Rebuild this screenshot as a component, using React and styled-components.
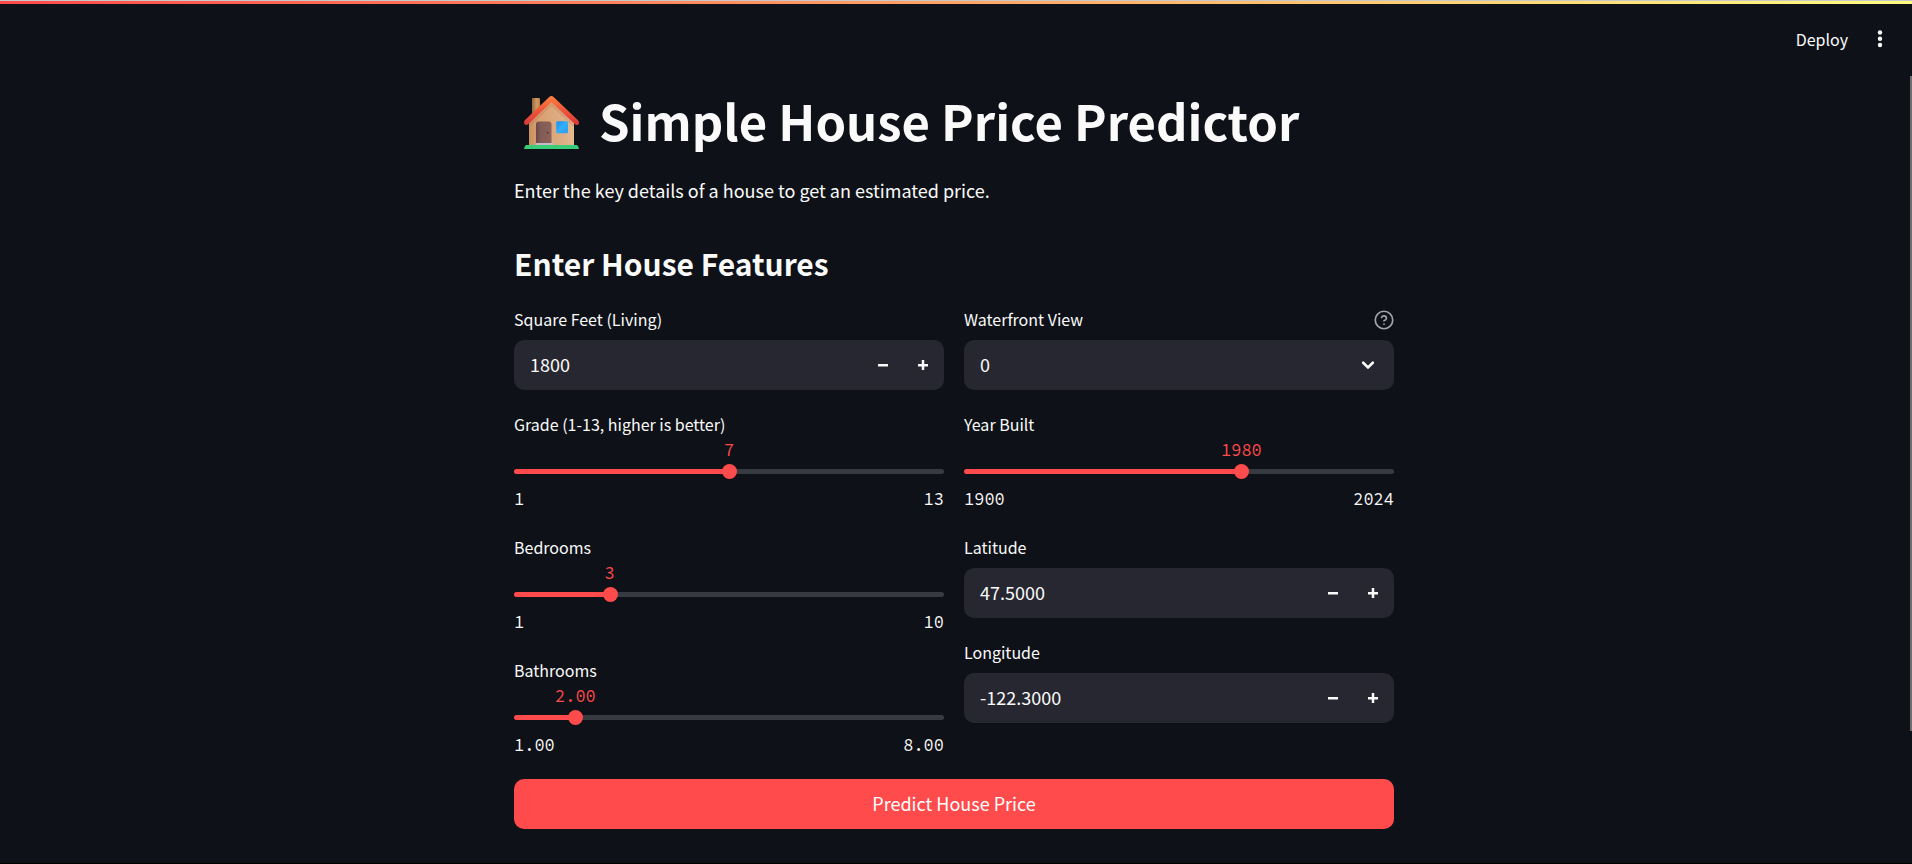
import React, { useId, useState } from "react";
import styled, { createGlobalStyle } from "styled-components";

const sans = `"Source Sans Pro", "Noto Sans CJK SC", "Open Sans", sans-serif`;
const mono = `"Source Code Pro", "Liberation Mono", monospace`;

const GlobalStyle = createGlobalStyle`
  *, *::before, *::after { box-sizing: border-box; }
  html { background: #0e1117; }
  body {
    margin: 0;
    background: #0e1117;
    color: #fafafa;
    font-family: ${sans};
    font-size: 18px;
  }
  button, input, select { font: inherit; color: inherit; }
`;

const Page = styled.div`
  min-height: 100vh;
  display: flex;
  flex-direction: column;
  border-top: 1px solid #c9c9cb;
  border-bottom: 1px solid #000;
`;

const Decoration = styled.div`
  height: 3px;
  background: linear-gradient(90deg, #ff4b4b, #fffd80);
`;

const Toolbar = styled.header`
  display: flex;
  justify-content: flex-end;
  align-items: center;
  gap: 20px;
  height: 72px;
  padding: 0 20px 2px 0;
`;

const ToolbarButton = styled.button`
  display: flex;
  align-items: center;
  justify-content: center;
  height: 30px;
  min-width: 24px;
  padding: 0;
  border: 0;
  background: none;
  font-size: 16px;
  line-height: 20px;
  cursor: pointer;
`;

const Content = styled.main`
  width: 100%;
  max-width: 884px;
  margin: 0 auto;
  padding: 8px 4px 32px 0;
  flex: 1;
`;

const Title = styled.h1`
  display: flex;
  align-items: center;
  gap: 20px;
  height: 76px;
  margin: 0;
  padding-left: 10px;
  font-size: 49px;
  line-height: 72px;
  font-weight: 700;
`;

const TitleText = styled.span`
  padding-bottom: 4px;
`;

const Intro = styled.p`
  margin: 18px 0 0;
  font-size: 18px;
  line-height: 24px;
`;

const Subtitle = styled.h2`
  margin: 36px 0 0;
  font-size: 30px;
  line-height: 50px;
  font-weight: 700;
`;

const Columns = styled.div`
  display: grid;
  grid-template-columns: 1fr 1fr;
  gap: 20px;
  margin-top: 22px;
`;

const Column = styled.div`
  display: flex;
  flex-direction: column;
  gap: 25px;
`;

const LabelRow = styled.div`
  display: flex;
  justify-content: space-between;
  align-items: flex-start;
  height: 20px;
`;

const Label = styled.label`
  font-size: 16px;
  line-height: 18px;
`;

const HelpButton = styled.button`
  display: flex;
  padding: 0;
  border: 0;
  background: none;
  color: #a3a4a8;
  cursor: help;
`;

const Box = styled.div`
  display: flex;
  align-items: center;
  height: 50px;
  margin-top: 10px;
  padding-right: 1px;
  border-radius: 10px;
  background: #262730;
  overflow: hidden;
`;

const NumberInput = styled.input`
  flex: 1;
  min-width: 0;
  height: 50px;
  padding: 0 16px 2px;
  border: 0;
  outline: 0;
  background: none;
  appearance: textfield;
  &::-webkit-inner-spin-button { appearance: none; margin: 0; }
`;

const StepButton = styled.button`
  display: flex;
  align-items: center;
  justify-content: center;
  width: 40px;
  height: 50px;
  padding: 0;
  border: 0;
  background: none;
  cursor: pointer;
`;

const SelectBox = styled(Box)`
  display: grid;
  padding: 0;
  & > * { grid-area: 1 / 1; }
  & > svg { justify-self: end; margin-right: 16px; pointer-events: none; }
`;

const Select = styled.select`
  width: 100%;
  height: 50px;
  padding: 0 16px 2px;
  border: 0;
  outline: 0;
  appearance: none;
  background: #262730;
`;

const SliderValue = styled.output`
  display: block;
  width: max-content;
  margin-top: 5px;
  transform: translateX(-50%);
  color: #ff4b4b;
  font-family: ${mono};
  font-size: 17px;
  line-height: 20px;
`;

const Rail = styled.div`
  display: grid;
  align-items: center;
  height: 15px;
  margin-top: 4px;
  & > * { grid-area: 1 / 1; }
`;

const Track = styled.div`
  height: 5px;
  border-radius: 3px;
`;

const Range = styled.input`
  height: 15px;
  margin: 0 -8px 0 -7px;
  appearance: none;
  background: none;
  cursor: pointer;
  &::-webkit-slider-thumb {
    appearance: none;
    width: 15px;
    height: 15px;
    border-radius: 50%;
    background: #ff4b4b;
  }
`;

const Limits = styled.div`
  display: flex;
  justify-content: space-between;
  margin-top: 10px;
  padding-bottom: 4px;
  font-family: ${mono};
  font-size: 17px;
  line-height: 20px;
`;

const Submit = styled.button`
  display: block;
  width: 100%;
  height: 50px;
  margin-top: 20px;
  padding: 0 0 2px;
  border: 0;
  border-radius: 10px;
  background: #ff4b4b;
  color: #fff;
  line-height: 24px;
  cursor: pointer;
`;

const ScrollThumb = styled.div`
  position: fixed;
  top: 76px;
  right: 0;
  width: 2px;
  height: calc(76vh - 2px);
  background: #6f6f72;
`;

const House = () => (
  <svg width="55" height="53" viewBox="0 0 55 53" role="img" aria-label="House">
    <defs>
      <linearGradient id="wall" x1="0" x2="1">
        <stop offset="0" stopColor="#c8905f" />
        <stop offset=".22" stopColor="#d9a071" />
        <stop offset=".8" stopColor="#dfaf87" />
        <stop offset="1" stopColor="#e6bc91" />
      </linearGradient>
      <linearGradient id="chimney" x1="0" x2="1">
        <stop offset="0" stopColor="#93683f" />
        <stop offset=".6" stopColor="#d29b62" />
        <stop offset="1" stopColor="#b98351" />
      </linearGradient>
      <linearGradient id="roof" x1="0" y1="0" x2="0" y2="1">
        <stop offset="0" stopColor="#ff803e" />
        <stop offset=".45" stopColor="#f0593a" />
        <stop offset="1" stopColor="#d9363a" />
      </linearGradient>
      <linearGradient id="door" x1="0" x2="1">
        <stop offset="0" stopColor="#68484a" />
        <stop offset=".3" stopColor="#835b55" />
        <stop offset="1" stopColor="#8c625b" />
      </linearGradient>
      <linearGradient id="pane" x1="0" y1="0" x2="1" y2="1">
        <stop offset="0" stopColor="#1790f0" />
        <stop offset=".5" stopColor="#34aefb" />
        <stop offset="1" stopColor="#2a9df0" />
      </linearGradient>
    </defs>
    <rect x="8" y="2" width="8" height="18" rx="1" fill="url(#chimney)" />
    <path d="M5 25 27.4 4 50 25V49H5Z" fill="url(#wall)" />
    <path d="M5 30 27.4 8.5 50 30" fill="none" stroke="#b8794c" strokeOpacity=".3" strokeWidth="2" />
    <path d="M25.5.8Q27.4-.8 29.3.8L54 24.2Q55 25.4 55 27.2 54.6 29.4 52.6 29 51.4 28.8 50 27.4L27.4 6.2 5 27.4Q3.400 29 2 29 0 28.800 0 26.500 0 25 1 24Z" fill="url(#roof)" />
    <path d="M12 48V28.500Q12 25.500 15 25.500H24.700Q27.500 25.500 27.500 28.500V48Z" fill="url(#door)" />
    <circle cx="23.700" cy="36.700" r="1" fill="#5a373b" />
    <rect x="11.500" y="47" width="18" height="2.500" rx="1" fill="#c5bbc3" />
    <rect x="32.200" y="25.200" width="11.800" height="12" rx="1.500" fill="url(#pane)" />
    <path d="M2 49H53Q54.500 50 55 53H0Q.5 50 2 49Z" fill="#3ccb78" />
  </svg>
);

const MinusIcon = () => (
  <svg width="10" height="10" viewBox="0 0 10 10" aria-hidden="true">
    <path d="M0 5.200H10" stroke="#fafafa" strokeWidth="2.500" />
  </svg>
);

const PlusIcon = () => (
  <svg width="10" height="10" viewBox="0 0 10 10" aria-hidden="true">
    <path d="M0 5.200H10M5 0V10" stroke="#fafafa" strokeWidth="2.500" />
  </svg>
);

const ChevronIcon = () => (
  <svg width="20" height="20" viewBox="0 0 20 20" aria-hidden="true">
    <path d="m5.200 7.700 4.800 4.700 4.800-4.700" fill="none" stroke="#fafafa" strokeWidth="2.600" strokeLinecap="round" />
  </svg>
);

const HelpIcon = () => (
  <svg width="20" height="20" viewBox="0 0 24 24" fill="none" stroke="currentColor" strokeWidth="2" strokeLinecap="round" strokeLinejoin="round" aria-hidden="true">
    <circle cx="12" cy="12" r="10.500" />
    <path d="M9.090 9a3 3 0 0 1 5.830 1c0 2-3 3-3 3M12 17h.01" />
  </svg>
);

const DotsIcon = () => (
  <svg width="6" height="20" viewBox="0 0 6 20" fill="#fafafa" aria-hidden="true">
    <circle cx="3" cy="3.500" r="2.200" />
    <circle cx="3" cy="9.700" r="2.200" />
    <circle cx="3" cy="16" r="2.200" />
  </svg>
);

function NumberField({ label, initial, step, digits }) {
  const id = useId();
  const [value, setValue] = useState(initial.toFixed(digits));
  const shift = (d) => setValue((Number(value) + d).toFixed(digits));
  return (
    <div>
      <LabelRow><Label htmlFor={id}>{label}</Label></LabelRow>
      <Box>
        <NumberInput id={id} type="number" step={step} value={value} onChange={(e) => setValue(e.target.value)} />
        <StepButton type="button" aria-label={`Decrease ${label}`} onClick={() => shift(-step)}><MinusIcon /></StepButton>
        <StepButton type="button" aria-label={`Increase ${label}`} onClick={() => shift(step)}><PlusIcon /></StepButton>
      </Box>
    </div>
  );
}

function SliderField({ label, min, max, initial, step = 1, digits = 0 }) {
  const id = useId();
  const [value, setValue] = useState(initial);
  const pct = ((value - min) / (max - min)) * 100;
  return (
    <div>
      <LabelRow><Label htmlFor={id}>{label}</Label></LabelRow>
      <SliderValue htmlFor={id} style={{ marginLeft: `${pct}%` }}>{value.toFixed(digits)}</SliderValue>
      <Rail>
        <Track style={{ background: `linear-gradient(to right, #ff4b4b ${pct}%, #383a42 ${pct}%)` }} />
        <Range id={id} type="range" min={min} max={max} step={step} value={value} onChange={(e) => setValue(Number(e.target.value))} />
      </Rail>
      <Limits><span>{min.toFixed(digits)}</span><span>{max.toFixed(digits)}</span></Limits>
    </div>
  );
}

function SelectField({ label, options }) {
  const id = useId();
  return (
    <div>
      <LabelRow>
        <Label htmlFor={id}>{label}</Label>
        <HelpButton type="button" aria-label={`Help for ${label}`}><HelpIcon /></HelpButton>
      </LabelRow>
      <SelectBox>
        <Select id={id}>{options.map((o) => <option key={o}>{o}</option>)}</Select>
        <ChevronIcon />
      </SelectBox>
    </div>
  );
}

export default function App() {
  return (
    <Page>
      <GlobalStyle />
      <Decoration />
      <Toolbar>
        <ToolbarButton type="button">Deploy</ToolbarButton>
        <ToolbarButton type="button" aria-label="Main menu"><DotsIcon /></ToolbarButton>
      </Toolbar>
      <Content>
        <Title><House /><TitleText>Simple House Price Predictor</TitleText></Title>
        <Intro>Enter the key details of a house to get an estimated price.</Intro>
        <Subtitle>Enter House Features</Subtitle>
        <form onSubmit={(e) => e.preventDefault()}>
          <Columns>
            <Column>
              <NumberField label="Square Feet (Living)" initial={1800} step={1} digits={0} />
              <SliderField label="Grade (1-13, higher is better)" min={1} max={13} initial={7} />
              <SliderField label="Bedrooms" min={1} max={10} initial={3} />
              <SliderField label="Bathrooms" min={1} max={8} initial={2} step={0.25} digits={2} />
            </Column>
            <Column>
              <SelectField label="Waterfront View" options={["0", "1"]} />
              <SliderField label="Year Built" min={1900} max={2024} initial={1980} />
              <NumberField label="Latitude" initial={47.5} step={0.01} digits={4} />
              <NumberField label="Longitude" initial={-122.3} step={0.01} digits={4} />
            </Column>
          </Columns>
          <Submit type="submit">Predict House Price</Submit>
        </form>
      </Content>
      <ScrollThumb />
    </Page>
  );
}
